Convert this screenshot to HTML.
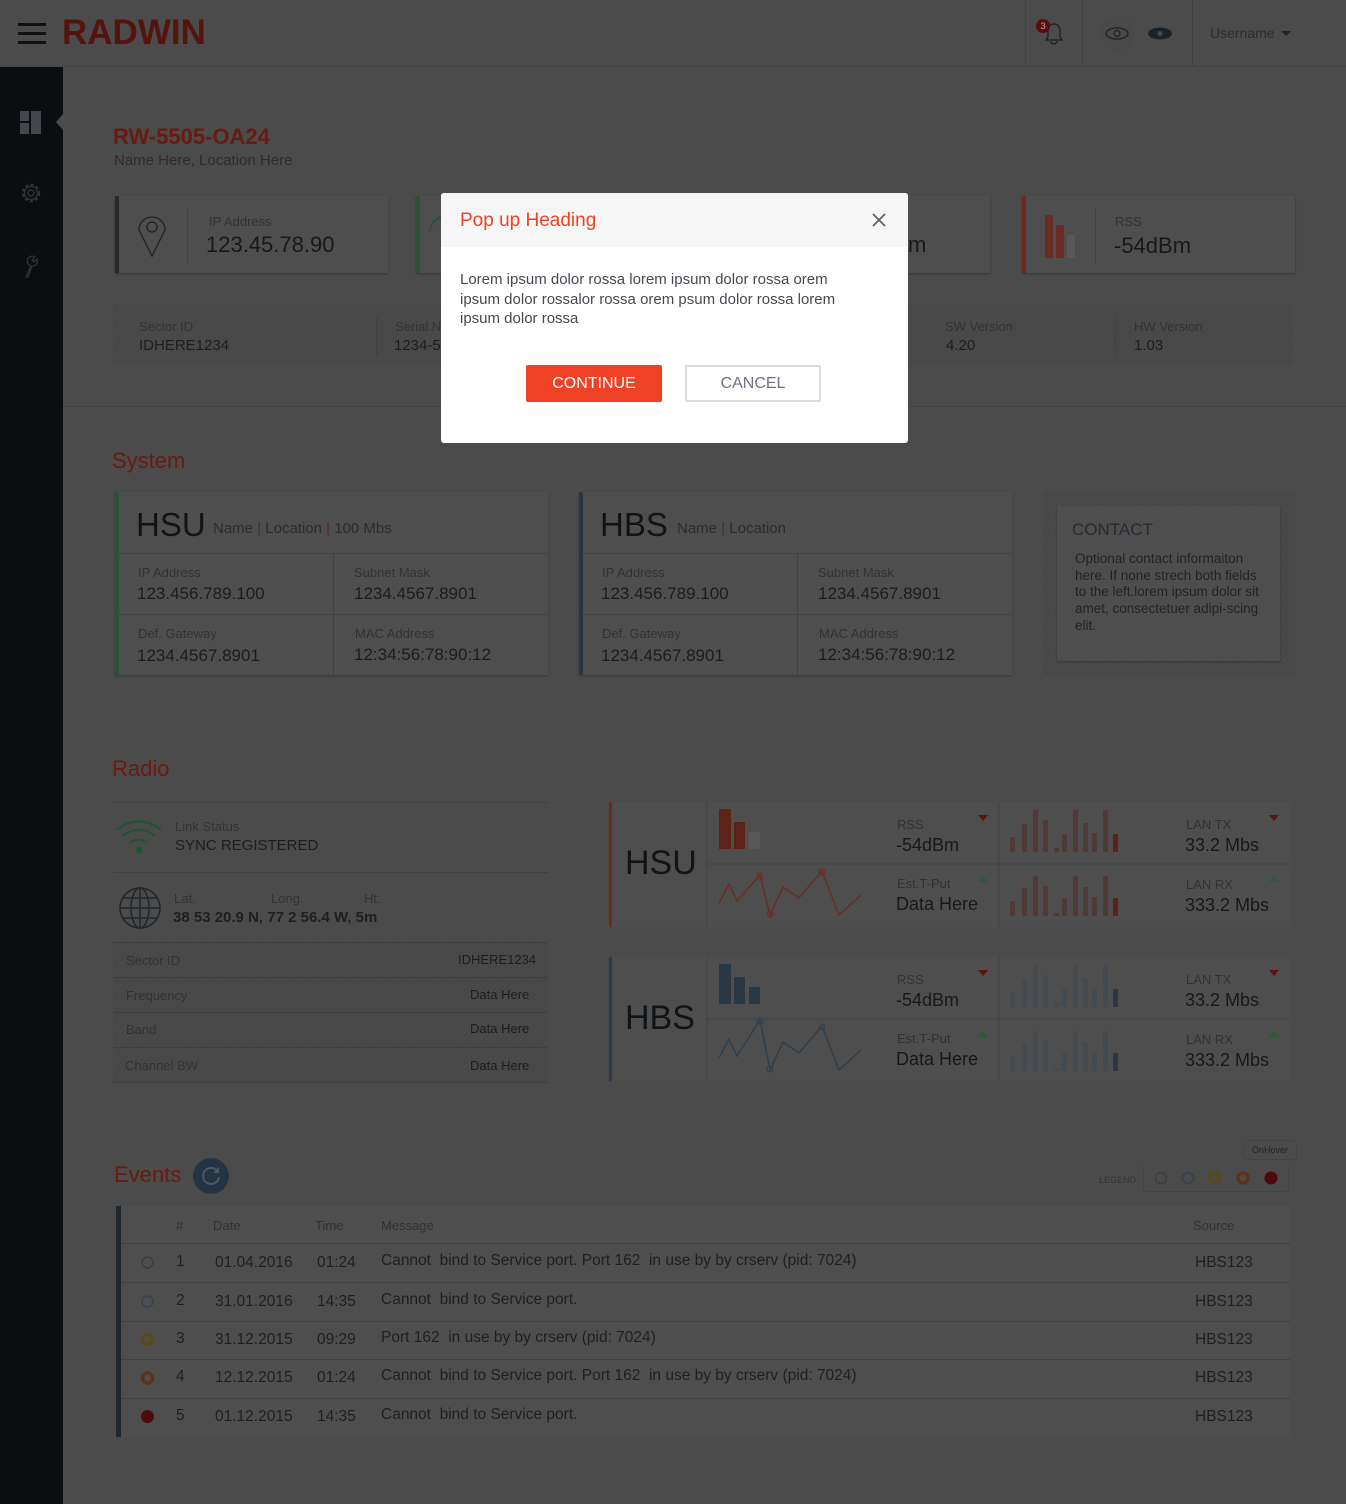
<!DOCTYPE html>
<html><head><meta charset="utf-8"><style>
*{box-sizing:border-box;margin:0;padding:0}
body{width:1346px;height:1504px;background:#4b4b4b;font-family:"Liberation Sans",sans-serif;position:relative;overflow:hidden;color:#1b1e21}
.a{position:absolute}
.lbl{color:#2f3337;font-size:13px}
.val{color:#1a1d20;font-size:17px}
.card{background:#4e4e4e;box-shadow:0 1px 2px rgba(0,0,0,.25)}
.stripe{background:repeating-linear-gradient(135deg,#4a4a4a 0 2px,#474747 2px 4px)}
.red{color:#6a1a10}
.vl{position:absolute;width:1px;background:#414141}
.hl{position:absolute;height:1px;background:#414141}
</style></head><body>
<!-- header -->
<div class="a" style="left:0;top:0;width:1346px;height:67px;border-bottom:1px solid #444"></div>
<div class="a" style="left:18px;top:23px;width:28px;height:3px;background:#111"></div>
<div class="a" style="left:18px;top:32px;width:28px;height:3px;background:#111"></div>
<div class="a" style="left:18px;top:41px;width:28px;height:3px;background:#111"></div>
<div class="a" style="left:62px;top:13px;font-size:35px;font-weight:bold;color:#54140d;letter-spacing:0px">RADWIN</div>
<div class="vl" style="left:1025px;top:0;height:67px"></div>
<div class="vl" style="left:1082px;top:0;height:67px"></div>
<div class="vl" style="left:1192px;top:0;height:67px"></div>
<svg class="a" style="left:1036px;top:17px" width="32" height="30"><path d="M10 23h16l-2-3v-7a6 6 0 0 0-12 0v7z M15 24a3 3 0 0 0 6 0" fill="none" stroke="#1d1f22" stroke-width="1.3"/><circle cx="7" cy="9" r="7" fill="#5a0c0f"/><text x="7" y="12" font-size="9" fill="#aaa" text-anchor="middle" font-family="Liberation Sans">3</text></svg>
<div class="a" style="left:1100px;top:16px;width:35px;height:35px;border-radius:50%;background:#494949"></div>
<svg class="a" style="left:1104px;top:25px" width="70" height="18"><ellipse cx="13" cy="8.5" rx="11" ry="5.5" fill="none" stroke="#222" stroke-width="1.3"/><circle cx="13" cy="8.5" r="3" fill="none" stroke="#222" stroke-width="1.3"/><ellipse cx="56" cy="8.5" rx="12" ry="6" fill="#1b2229"/><circle cx="56" cy="8.5" r="2.5" fill="#4b4b4b"/></svg>
<div class="a" style="left:1210px;top:25px;font-size:14px;color:#2a2d30">Username</div>
<div class="a" style="left:1281px;top:31px;border:5px solid transparent;border-top:5px solid #222"></div>
<!-- sidebar -->
<div class="a" style="left:0;top:67px;width:63px;height:1437px;background:#0b0e11"></div>
<div class="a" style="left:56px;top:114px;border:8px solid transparent;border-right:7px solid #4b4b4b;border-left:0"></div>
<svg class="a" style="left:19px;top:110px" width="24" height="26"><rect x="1" y="1" width="9" height="10" fill="#44484c"/><rect x="1" y="13" width="9" height="11" fill="#44484c"/><rect x="12" y="1" width="10" height="23" fill="#44484c"/></svg>
<svg class="a" style="left:19px;top:181px" width="24" height="24"><circle cx="12" cy="12" r="3" fill="none" stroke="#2c3238" stroke-width="1.5"/><circle cx="12" cy="12" r="8" fill="none" stroke="#2c3238" stroke-width="2.5" stroke-dasharray="3 2.3"/><circle cx="12" cy="12" r="6.5" fill="none" stroke="#2c3238" stroke-width="1.3"/></svg>
<svg class="a" style="left:22px;top:253px" width="20" height="26"><path d="M4 24l5-11a5 5 0 1 1 4-9l-3 3 2 2 3-3a5 5 0 0 1-5 7l-4 11z" fill="none" stroke="#2c3238" stroke-width="1.3"/></svg>
<!-- title -->
<div class="a red" style="left:113px;top:124px;font-size:22px;font-weight:bold">RW-5505-OA24</div>
<div class="a" style="left:114px;top:152px;font-size:15px;color:#2a2d30">Name Here, Location Here</div>
<!-- top cards -->
<div class="a card" style="left:115px;top:196px;width:273px;height:77px;border-left:4px solid #24292e"></div>
<svg class="a" style="left:136px;top:210px" width="32" height="48"><path d="M16 46L3 20a13 13 0 1 1 26 0z" fill="none" stroke="#222" stroke-width="1.3"/><circle cx="16" cy="17" r="5" fill="none" stroke="#222" stroke-width="1.3"/></svg>
<div class="vl" style="left:187px;top:207px;height:56px"></div>
<div class="a lbl" style="left:209px;top:214px">IP Address</div>
<div class="a" style="left:206px;top:232px;font-size:22px;color:#16191c">123.45.78.90</div>
<div class="a card" style="left:416px;top:196px;width:273px;height:77px;border-left:4px solid #2a5236"></div>
<svg class="a" style="left:428px;top:214px" width="20" height="20"><path d="M2 18a16 16 0 0 1 16-16" fill="none" stroke="#2a5236" stroke-width="2"/></svg>
<div class="a card" style="left:717px;top:196px;width:273px;height:77px"></div>
<div class="a" style="left:908px;top:232px;font-size:22px;color:#16191c">m</div>
<div class="a card" style="left:1022px;top:196px;width:273px;height:77px;border-left:4px solid #70281b"></div>
<div class="a" style="left:1045px;top:215px;width:8px;height:43px;background:#6a2c22"></div>
<div class="a" style="left:1056px;top:225px;width:8px;height:33px;background:#6a2c22"></div>
<div class="a" style="left:1067px;top:235px;width:8px;height:23px;background:#58585a"></div>
<div class="vl" style="left:1095px;top:207px;height:56px"></div>
<div class="a lbl" style="left:1115px;top:214px">RSS</div>
<div class="a" style="left:1114px;top:233px;font-size:22px;color:#16191c">-54dBm</div>
<!-- info strip -->
<div class="a stripe" style="left:113px;top:304px;width:1180px;height:61px"></div>
<div class="vl" style="left:376px;top:316px;height:40px"></div>
<div class="vl" style="left:1115px;top:316px;height:40px"></div>
<div class="a lbl" style="left:139px;top:319px">Sector ID</div><div class="a" style="left:139px;top:337px;font-size:15px">IDHERE1234</div>
<div class="a lbl" style="left:395px;top:319px">Serial N</div><div class="a" style="left:394px;top:337px;font-size:15px">1234-5</div>
<div class="a lbl" style="left:945px;top:319px">SW Version</div><div class="a" style="left:946px;top:337px;font-size:15px">4.20</div>
<div class="a lbl" style="left:1134px;top:319px">HW Version</div><div class="a" style="left:1134px;top:337px;font-size:15px">1.03</div>
<div class="hl" style="left:63px;top:406px;width:1283px;background:#444"></div>
<!-- System -->
<div class="a red" style="left:112px;top:448px;font-size:22px">System</div>
<div class="a card" style="left:115px;top:492px;width:433px;height:183px;border-left:4px solid #2a5236"></div>
<div class="a" style="left:136px;top:506px;font-size:33px;color:#111417">HSU</div>
<div class="a" style="left:213px;top:520px;font-size:15px;color:#2a2d30">Name <span style="color:#5a2a20">|</span> Location <span style="color:#5a2a20">|</span> 100 Mbs</div>
<div class="hl" style="left:119px;top:553px;width:429px"></div><div class="hl" style="left:119px;top:614px;width:429px"></div>
<div class="vl" style="left:333px;top:553px;height:122px"></div>
<div class="a lbl" style="left:138px;top:565px">IP Address</div><div class="a val" style="left:137px;top:584px">123.456.789.100</div>
<div class="a lbl" style="left:354px;top:565px">Subnet Mask</div><div class="a val" style="left:354px;top:584px">1234.4567.8901</div>
<div class="a lbl" style="left:138px;top:626px">Def. Gateway</div><div class="a val" style="left:137px;top:646px">1234.4567.8901</div>
<div class="a lbl" style="left:355px;top:626px">MAC Address</div><div class="a val" style="left:354px;top:645px">12:34:56:78:90:12</div>

<div class="a card" style="left:579px;top:492px;width:433px;height:183px;border-left:4px solid #2a3640"></div>
<div class="a" style="left:600px;top:506px;font-size:33px;color:#111417">HBS</div>
<div class="a" style="left:677px;top:520px;font-size:15px;color:#2a2d30">Name <span style="color:#5a2a20">|</span> Location</div>
<div class="hl" style="left:583px;top:553px;width:429px"></div><div class="hl" style="left:583px;top:614px;width:429px"></div>
<div class="vl" style="left:797px;top:553px;height:122px"></div>
<div class="a lbl" style="left:602px;top:565px">IP Address</div><div class="a val" style="left:601px;top:584px">123.456.789.100</div>
<div class="a lbl" style="left:818px;top:565px">Subnet Mask</div><div class="a val" style="left:818px;top:584px">1234.4567.8901</div>
<div class="a lbl" style="left:602px;top:626px">Def. Gateway</div><div class="a val" style="left:601px;top:646px">1234.4567.8901</div>
<div class="a lbl" style="left:819px;top:626px">MAC Address</div><div class="a val" style="left:818px;top:645px">12:34:56:78:90:12</div>

<div class="a stripe" style="left:1043px;top:492px;width:253px;height:183px"></div>
<div class="a card" style="left:1057px;top:506px;width:223px;height:155px"></div>
<div class="a" style="left:1072px;top:520px;font-size:17px;color:#252c33">CONTACT</div>
<div class="a" style="left:1075px;top:551px;font-size:13.5px;line-height:16.7px;color:#1f2225;width:190px">Optional contact informaiton here. If none strech both fields to the left.lorem ipsum dolor sit amet, consectetuer adipi-scing elit.</div>

<!-- Radio -->
<div class="a red" style="left:112px;top:756px;font-size:22px">Radio</div>
<div class="hl" style="left:113px;top:802px;width:435px"></div>
<svg class="a" style="left:115px;top:818px" width="50" height="36"><path d="M2 12a33 33 0 0 1 44 0M8 18a24 24 0 0 1 32 0M15 25a14 14 0 0 1 18 0" fill="none" stroke="#1f5534" stroke-width="2.2"/><circle cx="24" cy="32" r="3.5" fill="#1f5534"/></svg>
<div class="a lbl" style="left:175px;top:819px">Link Status</div>
<div class="a" style="left:175px;top:837px;font-size:15px;color:#1b1e21">SYNC REGISTERED</div>
<div class="hl" style="left:113px;top:872px;width:435px"></div>
<svg class="a" style="left:118px;top:886px" width="44" height="44"><g fill="none" stroke="#22282e" stroke-width="1.6"><circle cx="22" cy="22" r="20"/><ellipse cx="22" cy="22" rx="9" ry="20"/><path d="M22 2v40M2 22h40M5 12h34M5 32h34"/></g></svg>
<div class="a lbl" style="left:174px;top:891px">Lat.</div><div class="a lbl" style="left:271px;top:891px">Long.</div><div class="a lbl" style="left:364px;top:891px">Ht.</div>
<div class="a" style="left:173px;top:909px;font-size:15px;font-weight:bold;color:#1d2023">38 53 20.9 N, 77 2 56.4 W, 5m</div>
<div class="a stripe" style="left:113px;top:942px;width:435px;height:140px"></div>
<div class="hl" style="left:113px;top:942px;width:435px;background:#3f3f3f"></div>
<div class="hl" style="left:113px;top:977px;width:435px;background:#3f3f3f"></div>
<div class="hl" style="left:113px;top:1012px;width:435px;background:#3f3f3f"></div>
<div class="hl" style="left:113px;top:1047px;width:435px;background:#3f3f3f"></div>
<div class="hl" style="left:113px;top:1082px;width:435px;background:#3f3f3f"></div>
<div class="a lbl" style="left:126px;top:953px">Sector ID</div><div class="a" style="left:458px;top:952px;font-size:13px">IDHERE1234</div>
<div class="a lbl" style="left:126px;top:988px">Frequency</div><div class="a" style="left:470px;top:987px;font-size:13px">Data Here</div>
<div class="a lbl" style="left:126px;top:1022px">Band</div><div class="a" style="left:470px;top:1021px;font-size:13px">Data Here</div>
<div class="a lbl" style="left:125px;top:1058px">Channel BW</div><div class="a" style="left:470px;top:1058px;font-size:13px">Data Here</div>

<!-- radio cards -->
<svg class="a" style="left:607px;top:800px" width="690" height="285" font-family="Liberation Sans">
<g>
<rect x="2" y="2" width="682" height="125" fill="#4e4e4e"/><rect x="2" y="2" width="3" height="125" fill="#6e2a1c"/>
<path d="M100 2v125M392 2v125M100 64h584" stroke="#424242"/>
<text x="18" y="74" font-size="34" fill="#111417">HSU</text>
<rect x="112" y="9" width="12" height="40" fill="#5e2318"/><rect x="127" y="22" width="11" height="27" fill="#5e2318"/><rect x="142" y="32" width="11" height="17" fill="#575757"/>
<text x="290" y="29" font-size="13" fill="#2f3337">RSS</text><text x="289" y="51" font-size="18" fill="#16191c">-54dBm</text>
<path d="M371 15h10l-5 6z" fill="#5a1414"/>
<text x="290" y="88" font-size="13" fill="#2f3337">Est.T-Put</text><text x="289" y="110" font-size="18" fill="#16191c">Data Here</text>
<path d="M371 82h10l-5-6z" fill="#2a5a36"/>
<polyline points="112,103 122,84 130,101 153,75 163,115 176,87 192,98 215,71 232,115 254,95" fill="none" stroke="#6a2c22" stroke-width="1.4"/>
<circle cx="153" cy="76" r="3" fill="none" stroke="#6a2c22"/><circle cx="163" cy="114" r="3" fill="none" stroke="#6a2c22"/><circle cx="215" cy="72" r="3" fill="none" stroke="#6a2c22"/>
<g fill="#4f3a36"><rect x="403" y="37" width="5" height="15"/><rect x="415" y="24" width="5" height="28"/><rect x="426" y="10" width="5" height="42"/><rect x="436" y="20" width="5" height="32"/><rect x="447" y="48" width="5" height="4"/><rect x="455" y="34" width="5" height="18"/><rect x="466" y="10" width="5" height="42"/><rect x="476" y="23" width="5" height="29"/><rect x="485" y="33" width="5" height="19"/><rect x="496" y="10" width="5" height="42"/></g><rect x="506" y="34" width="5" height="18" fill="#5e2318"/>
<g fill="#4f3a36"><rect x="403" y="101" width="5" height="15"/><rect x="415" y="88" width="5" height="28"/><rect x="426" y="76" width="5" height="40"/><rect x="436" y="86" width="5" height="30"/><rect x="447" y="113" width="5" height="3"/><rect x="455" y="98" width="5" height="18"/><rect x="466" y="76" width="5" height="40"/><rect x="476" y="87" width="5" height="29"/><rect x="485" y="97" width="5" height="19"/><rect x="496" y="76" width="5" height="40"/></g><rect x="506" y="98" width="5" height="18" fill="#5e2318"/>
<text x="579" y="29" font-size="13" fill="#2f3337">LAN TX</text><text x="578" y="51" font-size="18" fill="#16191c">33.2 Mbs</text>
<path d="M662 15h10l-5 6z" fill="#5a1414"/>
<text x="579" y="89" font-size="13" fill="#2f3337">LAN RX</text><text x="578" y="111" font-size="18" fill="#16191c">333.2 Mbs</text>
<path d="M662 82h10l-5-6z" fill="#2a5a36"/>
</g>
<g transform="translate(0,155)">
<rect x="2" y="2" width="682" height="124" fill="#4e4e4e"/><rect x="2" y="2" width="3" height="124" fill="#2a3a48"/>
<path d="M100 2v124M392 2v124M100 64h584" stroke="#424242"/>
<text x="18" y="74" font-size="34" fill="#111417">HBS</text>
<rect x="112" y="9" width="12" height="40" fill="#2a3846"/><rect x="127" y="22" width="11" height="27" fill="#2a3846"/><rect x="142" y="32" width="11" height="17" fill="#2a3846"/>
<text x="290" y="29" font-size="13" fill="#2f3337">RSS</text><text x="289" y="51" font-size="18" fill="#16191c">-54dBm</text>
<path d="M371 15h10l-5 6z" fill="#5a1414"/>
<text x="290" y="88" font-size="13" fill="#2f3337">Est.T-Put</text><text x="289" y="110" font-size="18" fill="#16191c">Data Here</text>
<path d="M371 82h10l-5-6z" fill="#2a5a36"/>
<polyline points="112,103 122,84 130,101 153,65 163,115 176,87 192,98 215,71 232,115 254,95" fill="none" stroke="#2e3e4c" stroke-width="1.4"/>
<circle cx="153" cy="66" r="3" fill="none" stroke="#2e3e4c"/><circle cx="163" cy="114" r="3" fill="none" stroke="#2e3e4c"/><circle cx="215" cy="72" r="3" fill="none" stroke="#2e3e4c"/>
<g fill="#434a52"><rect x="403" y="37" width="5" height="15"/><rect x="415" y="24" width="5" height="28"/><rect x="426" y="10" width="5" height="42"/><rect x="436" y="20" width="5" height="32"/><rect x="447" y="48" width="5" height="4"/><rect x="455" y="34" width="5" height="18"/><rect x="466" y="10" width="5" height="42"/><rect x="476" y="23" width="5" height="29"/><rect x="485" y="33" width="5" height="19"/><rect x="496" y="10" width="5" height="42"/></g><rect x="506" y="34" width="5" height="18" fill="#2a3846"/>
<g fill="#434a52"><rect x="403" y="101" width="5" height="15"/><rect x="415" y="88" width="5" height="28"/><rect x="426" y="76" width="5" height="40"/><rect x="436" y="86" width="5" height="30"/><rect x="447" y="113" width="5" height="3"/><rect x="455" y="98" width="5" height="18"/><rect x="466" y="76" width="5" height="40"/><rect x="476" y="87" width="5" height="29"/><rect x="485" y="97" width="5" height="19"/><rect x="496" y="76" width="5" height="40"/></g><rect x="506" y="98" width="5" height="18" fill="#2a3846"/>
<text x="579" y="29" font-size="13" fill="#2f3337">LAN TX</text><text x="578" y="51" font-size="18" fill="#16191c">33.2 Mbs</text>
<path d="M662 15h10l-5 6z" fill="#5a1414"/>
<text x="579" y="89" font-size="13" fill="#2f3337">LAN RX</text><text x="578" y="111" font-size="18" fill="#16191c">333.2 Mbs</text>
<path d="M662 82h10l-5-6z" fill="#2a5a36"/>
</g>
</svg>

<!-- Events -->
<div class="a red" style="left:114px;top:1162px;font-size:22px">Events</div>
<div class="a" style="left:193px;top:1158px;width:36px;height:36px;border-radius:50%;background:#233545"></div>
<svg class="a" style="left:199px;top:1164px" width="24" height="24"><path d="M19 8a8 8 0 1 0 1 5" fill="none" stroke="#4a5866" stroke-width="2"/><path d="M20 3v6h-6z" fill="#4a5866"/></svg>
<div class="a" style="left:1243px;top:1140px;width:54px;height:20px;border:1px solid #444;border-radius:3px;font-size:9px;color:#222;text-align:center;line-height:18px">OnHover</div>
<div class="a" style="left:1099px;top:1175px;font-size:9px;color:#333">LEGEND</div>
<div class="a" style="left:1143px;top:1165px;width:146px;height:27px;border:1px solid #444;border-top:none;border-radius:0 0 4px 4px"></div>
<svg class="a" style="left:1150px;top:1168px" width="132" height="20"><circle cx="11" cy="10" r="5.5" fill="none" stroke="#3c3c3c" stroke-width="1.3"/><circle cx="38" cy="10" r="5.5" fill="none" stroke="#3c4152" stroke-width="2"/><circle cx="65" cy="10" r="5" fill="none" stroke="#5a4a10" stroke-width="3"/><circle cx="93" cy="10" r="5" fill="none" stroke="#5e3217" stroke-width="3.5"/><circle cx="121" cy="10" r="6.5" fill="#4e0a0c"/></svg>
<div class="a card" style="left:116px;top:1206px;width:1174px;height:231px;border-left:5px solid #1f262c;box-shadow:none"></div>
<div class="a lbl" style="left:176px;top:1218px">#</div><div class="a lbl" style="left:213px;top:1218px">Date</div><div class="a lbl" style="left:315px;top:1218px">Time</div><div class="a lbl" style="left:381px;top:1218px">Message</div><div class="a lbl" style="left:1193px;top:1218px">Source</div>
<div class="hl" style="left:121px;top:1243px;width:1169px"></div><div class="hl" style="left:121px;top:1282px;width:1169px"></div><div class="hl" style="left:121px;top:1321px;width:1169px"></div><div class="hl" style="left:121px;top:1359px;width:1169px"></div><div class="hl" style="left:121px;top:1398px;width:1169px"></div>
<svg class="a" style="left:140px;top:1254px" width="16" height="172"><circle cx="7.5" cy="8.5" r="5.5" fill="none" stroke="#3c3c3c" stroke-width="1.3"/><circle cx="7.5" cy="47.5" r="5.5" fill="none" stroke="#3c4152" stroke-width="1.8"/><circle cx="7.5" cy="85.5" r="5" fill="none" stroke="#5a4a10" stroke-width="3"/><circle cx="7.5" cy="124" r="5" fill="none" stroke="#5e3217" stroke-width="3.5"/><circle cx="7.5" cy="162.5" r="6.5" fill="#4e0a0c"/></svg>
<div class="a" style="left:0;top:1254px;font-size:15.5px;color:#1d2023;line-height:1">
<div class="a" style="left:176px;top:0">1</div><div class="a" style="left:215px;top:1px">01.04.2016</div><div class="a" style="left:317px;top:1px">01:24</div><div class="a" style="left:381px;top:-1px;white-space:nowrap">Cannot&nbsp; bind to Service port. Port 162&nbsp; in use by by crserv (pid: 7024)</div><div class="a" style="left:1195px;top:1px">HBS123</div>
<div class="a" style="left:176px;top:39px">2</div><div class="a" style="left:215px;top:40px">31.01.2016</div><div class="a" style="left:317px;top:40px">14:35</div><div class="a" style="left:381px;top:38px;white-space:nowrap">Cannot&nbsp; bind to Service port.</div><div class="a" style="left:1195px;top:40px">HBS123</div>
<div class="a" style="left:176px;top:77px">3</div><div class="a" style="left:215px;top:78px">31.12.2015</div><div class="a" style="left:317px;top:78px">09:29</div><div class="a" style="left:381px;top:76px;white-space:nowrap">Port 162&nbsp; in use by by crserv (pid: 7024)</div><div class="a" style="left:1195px;top:78px">HBS123</div>
<div class="a" style="left:176px;top:115px">4</div><div class="a" style="left:215px;top:116px">12.12.2015</div><div class="a" style="left:317px;top:116px">01:24</div><div class="a" style="left:381px;top:114px;white-space:nowrap">Cannot&nbsp; bind to Service port. Port 162&nbsp; in use by by crserv (pid: 7024)</div><div class="a" style="left:1195px;top:116px">HBS123</div>
<div class="a" style="left:176px;top:154px">5</div><div class="a" style="left:215px;top:155px">01.12.2015</div><div class="a" style="left:317px;top:155px">14:35</div><div class="a" style="left:381px;top:153px;white-space:nowrap">Cannot&nbsp; bind to Service port.</div><div class="a" style="left:1195px;top:155px">HBS123</div>
</div>

<!-- popup -->
<div class="a" style="left:441px;top:193px;width:467px;height:250px;background:#fff;border-radius:3px;overflow:hidden">
<div style="height:54px;background:#f6f6f6"></div>
<div class="a" style="left:19px;top:17px;font-size:19px;color:#ef4123">Pop up Heading</div>
<svg class="a" style="left:430px;top:19px" width="16" height="16"><path d="M2 2l12 12M14 2L2 14" stroke="#5b6470" stroke-width="1.8"/></svg>
<div class="a" style="left:19px;top:77px;width:400px;font-size:15px;line-height:19.5px;color:#454a50">Lorem ipsum dolor rossa lorem ipsum dolor rossa orem ipsum dolor rossalor rossa orem psum dolor rossa lorem ipsum dolor rossa</div>
<div class="a" style="left:85px;top:172px;width:136px;height:37px;background:#ef4123;border-radius:2px;color:#fff;font-size:16px;text-align:center;line-height:37px">CONTINUE</div>
<div class="a" style="left:244px;top:172px;width:136px;height:37px;border:2px solid #d8dce0;border-radius:2px;color:#6b7480;font-size:16px;text-align:center;line-height:33px">CANCEL</div>
</div>
</body></html>
